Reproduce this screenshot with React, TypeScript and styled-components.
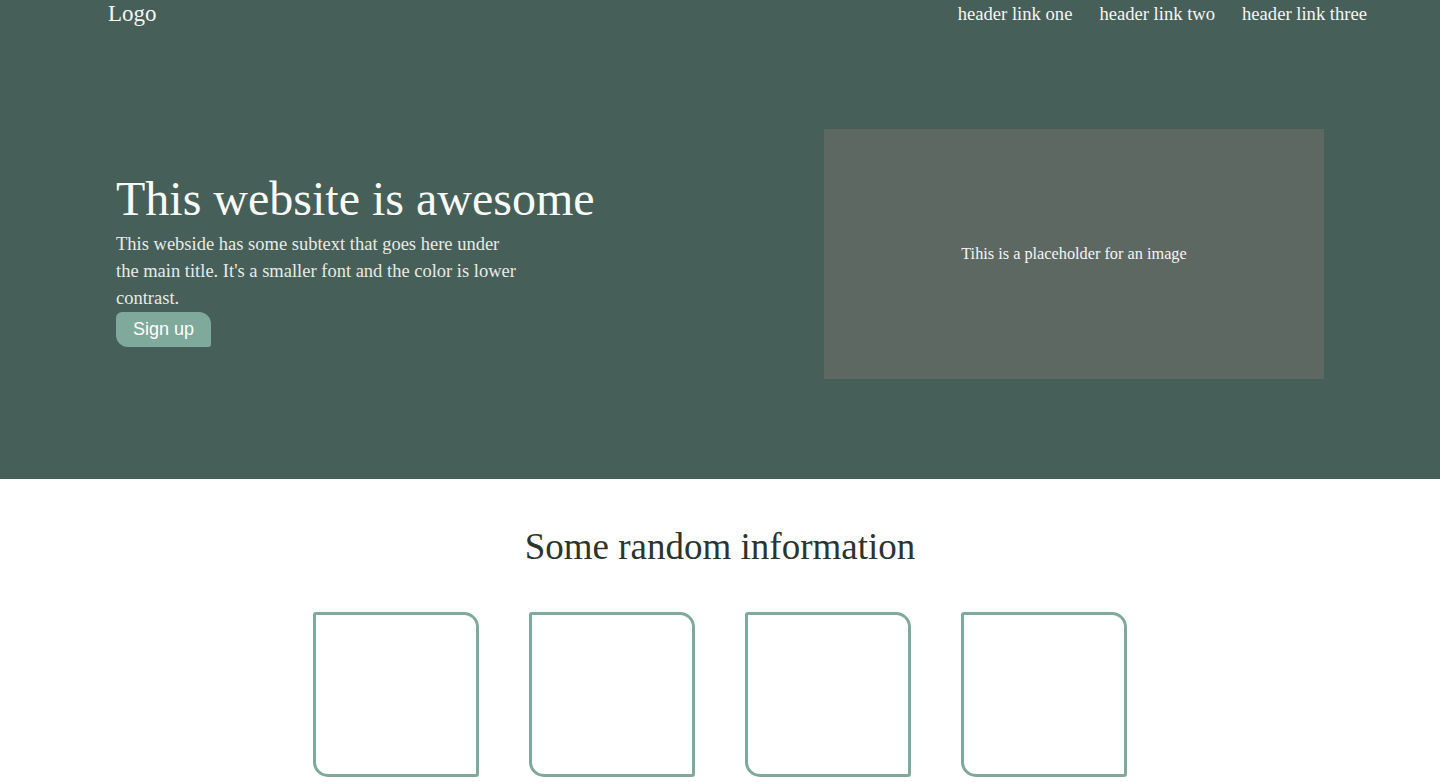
import styled, { createGlobalStyle } from "styled-components";

const GlobalStyle = createGlobalStyle`
  body {
    margin: 0;
    font-family: "Liberation Serif", "DejaVu Serif", serif;
    background: #ffffff;
  }
`

const Hero = styled.section`
  background: #466059;
  height: 479px;
  display: flex;
  flex-direction: column;
`

const Header = styled.header`
  display: flex;
  justify-content: space-between;
  align-items: center;
  padding: 0 73px 0 108px;
  height: 28px;
  color: #f5f5f5;
`

const Logo = styled.div`
  font-size: 23px;
`

const Nav = styled.nav`
  display: flex;
  gap: 27px;
  font-size: 18.6px;
`

const NavLink = styled.a`
  color: #f5f5f5;
  text-decoration: none;
`

const HeroBody = styled.div`
  display: flex;
  justify-content: space-between;
  align-items: center;
  padding: 101px 116px 0 116px;
`

const HeroText = styled.div`
  display: flex;
  flex-direction: column;
  align-items: flex-start;
  padding-top: 8px;
`

const Title = styled.h1`
  margin: 0;
  font-size: 48px;
  font-weight: normal;
  color: #f9faf8;
  line-height: 60px;
`

const Subtext = styled.p`
  margin: 2px 0 0;
  width: 405px;
  font-size: 18.5px;
  line-height: 27px;
  color: #e8eae6;
`

const SignUp = styled.button`
  width: 95px;
  height: 35px;
  border: none;
  background: #7fa99b;
  color: #ffffff;
  font-family: "Liberation Sans", Arial, sans-serif;
  font-size: 18px;
  border-radius: 6px 12px 3px 12px;
  cursor: pointer;
`

const Placeholder = styled.div`
  width: 500px;
  height: 250px;
  background: #5e6862;
  color: #f5f5f5;
  font-size: 16.3px;
  display: flex;
  align-items: center;
  justify-content: center;
`

const Info = styled.section`
  display: flex;
  flex-direction: column;
  align-items: center;
  padding-top: 46px;
`

const InfoTitle = styled.h2`
  margin: 0;
  font-size: 37px;
  font-weight: normal;
  color: #2b3530;
  line-height: 44px;
`

const Cards = styled.div`
  display: flex;
  gap: 50px;
  margin-top: 43px;
`

const Card = styled.div`
  width: 160px;
  height: 159px;
  border: 3px solid #7fa99b;
  border-radius: 3px 15px 3px 15px;
`

export default function App() {
  return (
    <>
      <GlobalStyle />
      <Hero>
        <Header>
          <Logo>Logo</Logo>
          <Nav>
            <NavLink href="#">header link one</NavLink>
            <NavLink href="#">header link two</NavLink>
            <NavLink href="#">header link three</NavLink>
          </Nav>
        </Header>
        <HeroBody>
          <HeroText>
            <Title>This website is awesome</Title>
            <Subtext>
              This webside has some subtext that goes here under the main title. It's a smaller font and the color is lower contrast.
            </Subtext>
            <SignUp>Sign up</SignUp>
          </HeroText>
          <Placeholder>Tihis is a placeholder for an image</Placeholder>
        </HeroBody>
      </Hero>
      <Info>
        <InfoTitle>Some random information</InfoTitle>
        <Cards>
          {[1, 2, 3, 4].map(n => <Card key={n} />)}
        </Cards>
      </Info>
    </>
  );
}
